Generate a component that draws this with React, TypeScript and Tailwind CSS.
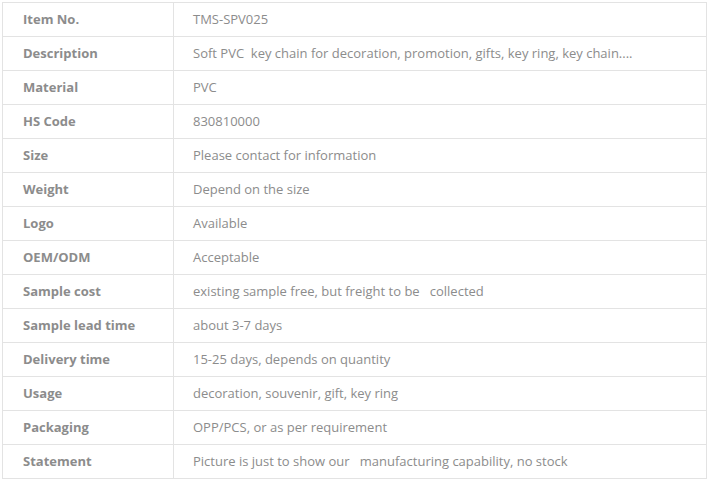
import React from 'react';

const rows: [string, string][] = [
  ['Item No.', 'TMS-SPV025'],
  ['Description', 'Soft PVC  key chain for decoration, promotion, gifts, key ring, key chain....'],
  ['Material', 'PVC'],
  ['HS Code', '830810000'],
  ['Size', 'Please contact for information'],
  ['Weight', 'Depend on the size'],
  ['Logo', 'Available'],
  ['OEM/ODM', 'Acceptable'],
  ['Sample cost', 'existing sample free, but freight to be   collected'],
  ['Sample lead time', 'about 3-7 days'],
  ['Delivery time', '15-25 days, depends on quantity'],
  ['Usage', 'decoration, souvenir, gift, key ring'],
  ['Packaging', 'OPP/PCS, or as per requirement'],
  ['Statement', 'Picture is just to show our   manufacturing capability, no stock'],
];

export default function App() {
  return (
    <div className="w-[707px] h-[480px] overflow-hidden bg-white pt-[2px] pl-[2px] font-['Open_Sans',sans-serif] text-[13px]">
      <table className="w-[705px] border-collapse">
        <tbody>
          {rows.map(([label, value]) => (
            <tr key={label} className="h-[34px]">
              <td className="w-[171px] border border-[#e3e3e3] pl-[20px] font-bold text-[#8c8c8c] whitespace-pre">{label}</td>
              <td className="border border-[#e3e3e3] pl-[19px] text-[#8c8c8c] whitespace-pre">{value}</td>
            </tr>
          ))}
        </tbody>
      </table>
    </div>
  );
}
